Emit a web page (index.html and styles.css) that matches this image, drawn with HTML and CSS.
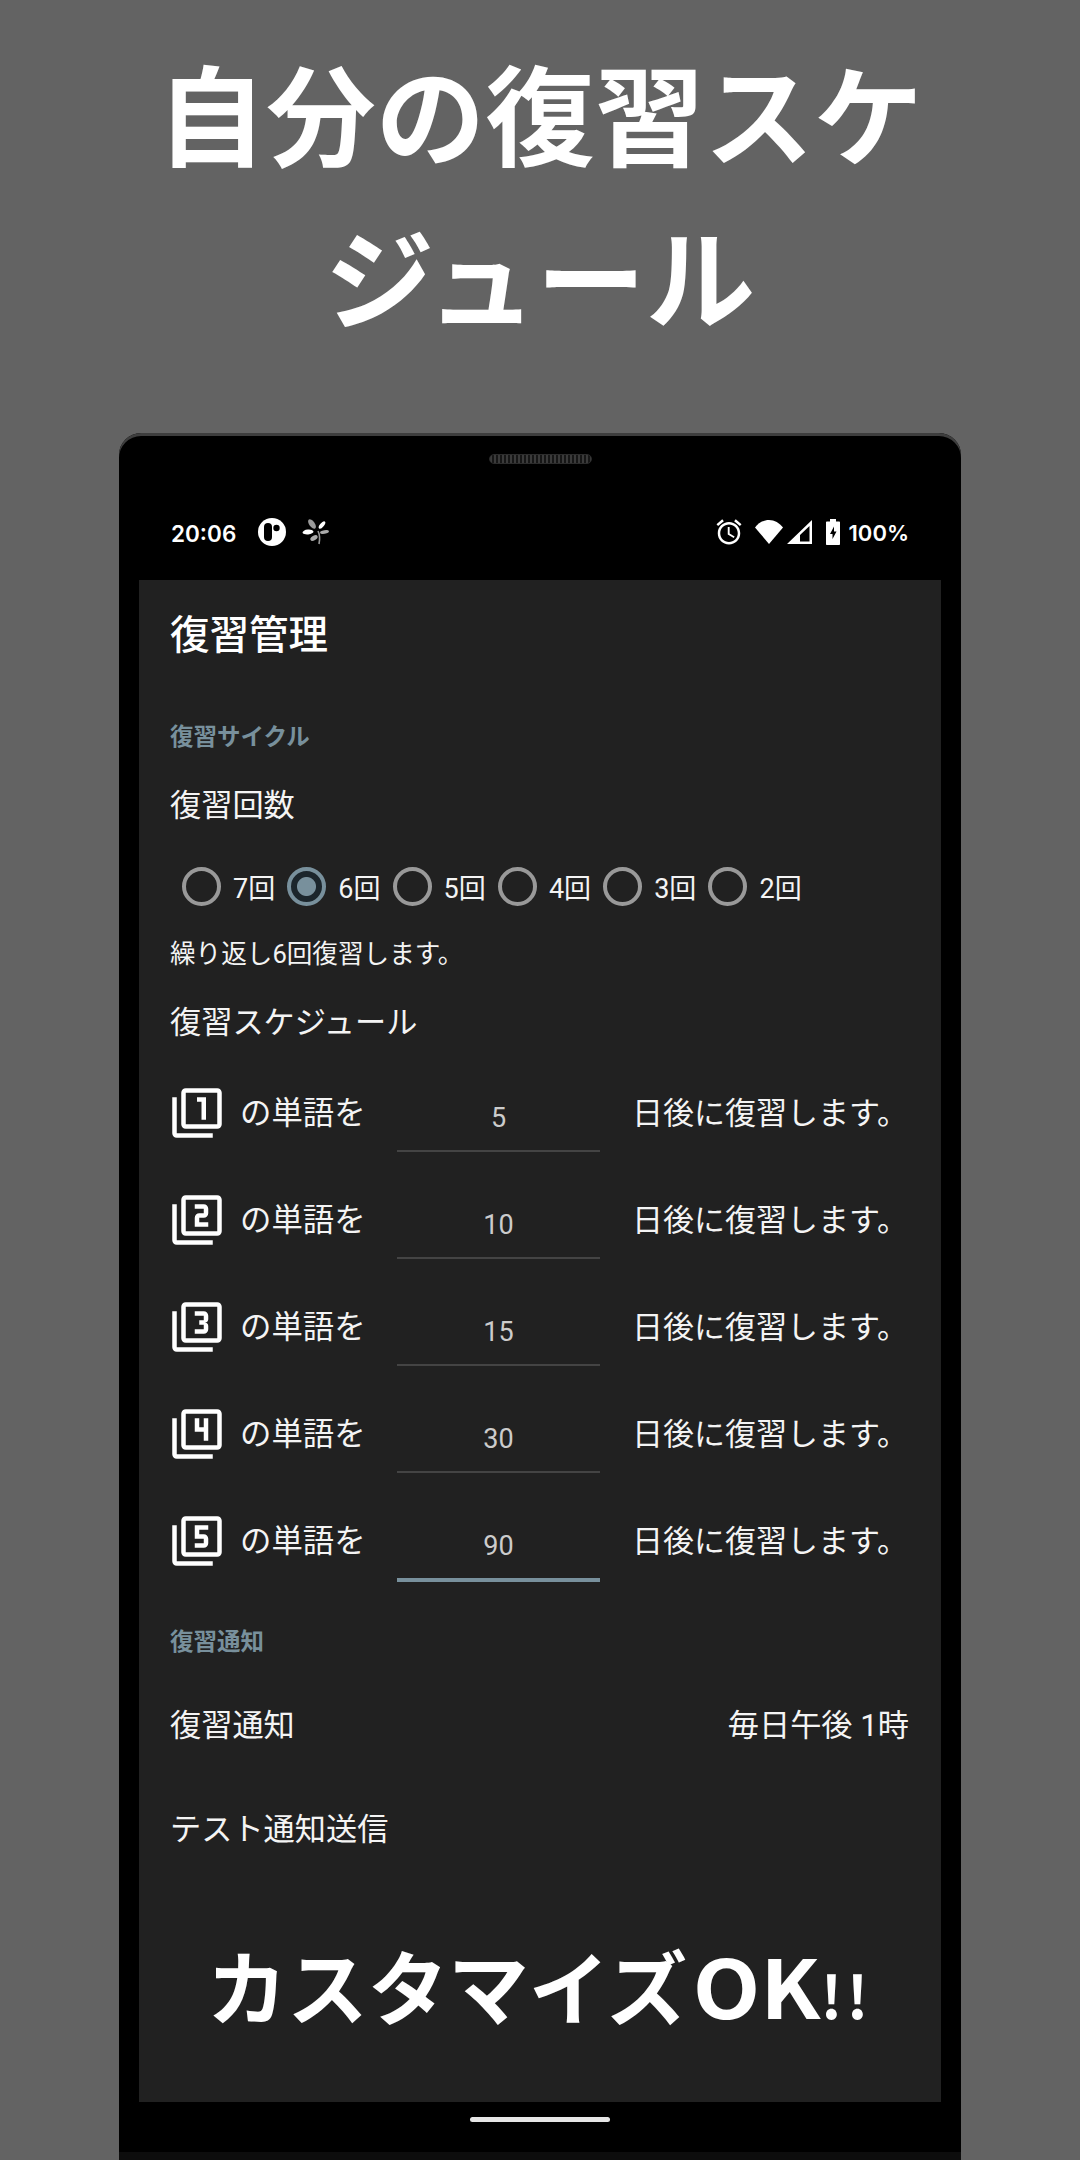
FILE: index.html
```html
<!DOCTYPE html>
<html lang="ja">
<head>
<meta charset="utf-8">
<title>復習管理</title>
<link rel="stylesheet" href="styles.css">
</head>
<body>
<h1 class="headline">自分の復習スケ<br>ジュール</h1>
<div class="phone">
  <div class="speaker"></div>
  <div class="statusbar">
    <div class="status-group">
      <span class="clock">20:06</span>
      <svg class="app-icon" viewBox="0 0 28 28"><circle cx="14" cy="14" r="14" fill="#fff"/><rect x="6" y="5" width="8" height="18" rx="4" fill="#000"/><circle cx="18.5" cy="10" r="3.2" fill="#000"/></svg>
      <svg class="leaf-icon" viewBox="0 0 28 28"><g><ellipse cx="10" cy="6" rx="2.8" ry="5.5" transform="rotate(-35 10 6)" fill="#999"/><ellipse cx="20" cy="7" rx="2" ry="4.5" transform="rotate(40 20 7)" fill="#fff"/><ellipse cx="6" cy="14" rx="5.5" ry="2.4" transform="rotate(-5 6 14)" fill="#fff"/><ellipse cx="22.5" cy="14" rx="4.5" ry="1.8" transform="rotate(-8 22.5 14)" fill="#aaa"/><ellipse cx="12" cy="20" rx="4" ry="2.2" transform="rotate(-30 12 20)" fill="#aaa"/><path d="M16 13c2 4 2 8 1 13" stroke="#999" stroke-width="1.6" fill="none"/></g></svg>
    </div>
    <div class="status-group right">
      <svg class="alarm-icon" viewBox="0 0 24 24"><path fill="#fff" d="M22 5.72l-4.6-3.86-1.29 1.53 4.6 3.86L22 5.72zM7.88 3.39L6.6 1.86 2 5.71l1.29 1.53 4.59-3.85zM12.5 8H11v6l4.75 2.85.75-1.23-4-2.37V8zM12 4c-4.97 0-9 4.03-9 9s4.03 9 9 9 9-4.03 9-9-4.03-9-9-9zm0 16c-3.87 0-7-3.13-7-7s3.13-7 7-7 7 3.13 7 7-3.13 7-7 7z"/></svg>
      <svg class="wifi-icon" viewBox="0 0 28 24"><path fill="#fff" d="M0 7.5C3.5 3 8.5 0 14 0s10.500 3 14 7.500L14 24z"/></svg>
      <svg class="signal-icon" viewBox="0 0 25 24"><path fill="#fff" d="M25 0v24H0zM22.500 6L13 15v6.500h9.500z"/><path fill="#fff" d="M13 15L2 24h11z"/></svg>
      <svg class="battery-icon" viewBox="0 0 14 26"><path fill="#fff" d="M4 0h6v2.500h3c.6 0 1 .4 1 1V25c0 .6-.4 1-1 1H1c-.6 0-1-.4-1-1V3.500c0-.6.4-1 1-1h3z"/><path fill="#000" d="M8 7.500L4 15h2.500v5L10.500 12.500H8z"/></svg>
      <span class="battery-text">100%</span>
    </div>
  </div>
  <main class="screen">
    <div class="app-title">復習管理</div>
    <div class="section-label">復習サイクル</div>
    <div class="count-title">復習回数</div>
    <div class="radios">
      <div class="radio"><span class="dot"></span><span class="radio-text">7回</span></div>
      <div class="radio checked"><span class="dot"></span><span class="radio-text">6回</span></div>
      <div class="radio"><span class="dot"></span><span class="radio-text">5回</span></div>
      <div class="radio"><span class="dot"></span><span class="radio-text">4回</span></div>
      <div class="radio"><span class="dot"></span><span class="radio-text">3回</span></div>
      <div class="radio"><span class="dot"></span><span class="radio-text">2回</span></div>
    </div>
    <div class="note">繰り返し6回復習します。</div>
    <div class="schedule-title">復習スケジュール</div>

    <div class="row">
      <svg class="filter" viewBox="0 0 24 24"><path d="M3 5H1v16c0 1.100.9 2 2 2h16v-2H3V5zm11 10h2V5h-4v2h2v8zm7-14H7c-1.100 0-2 .9-2 2v14c0 1.100.9 2 2 2h14c1.100 0 2-.9 2-2V3c0-1.100-.9-2-2-2zm0 16H7V3h14v14z"/></svg>
      <span class="row-lead">の単語を</span>
      <div class="field">5</div>
      <span class="row-tail">日後に復習します。</span>
    </div>
    <div class="row">
      <svg class="filter" viewBox="0 0 24 24"><path d="M3 5H1v16c0 1.100.9 2 2 2h16v-2H3V5zm18-4H7c-1.100 0-2 .9-2 2v14c0 1.100.9 2 2 2h14c1.100 0 2-.9 2-2V3c0-1.100-.9-2-2-2zm0 16H7V3h14v14zm-4-4h-4v-2h2c1.100 0 2-.89 2-2V7c0-1.110-.9-2-2-2h-4v2h4v2h-2c-1.100 0-2 .89-2 2v4h6v-2z"/></svg>
      <span class="row-lead">の単語を</span>
      <div class="field">10</div>
      <span class="row-tail">日後に復習します。</span>
    </div>
    <div class="row">
      <svg class="filter" viewBox="0 0 24 24"><path d="M21 1H7c-1.100 0-2 .9-2 2v14c0 1.100.9 2 2 2h14c1.100 0 2-.9 2-2V3c0-1.100-.9-2-2-2zm0 16H7V3h14v14zM3 5H1v16c0 1.100.9 2 2 2h16v-2H3V5zm14 8v-1.500c0-.83-.67-1.500-1.500-1.500.83 0 1.500-.67 1.500-1.500V7c0-1.110-.9-2-2-2h-4v2h4v2h-2v2h2v2h-4v2h4c1.100 0 2-.89 2-2z"/></svg>
      <span class="row-lead">の単語を</span>
      <div class="field">15</div>
      <span class="row-tail">日後に復習します。</span>
    </div>
    <div class="row">
      <svg class="filter" viewBox="0 0 24 24"><path d="M3 5H1v16c0 1.100.9 2 2 2h16v-2H3V5zm12 10h2V5h-2v4h-2V5h-2v6h4v4zm6-14H7c-1.100 0-2 .9-2 2v14c0 1.100.9 2 2 2h14c1.100 0 2-.9 2-2V3c0-1.100-.9-2-2-2zm0 16H7V3h14v14z"/></svg>
      <span class="row-lead">の単語を</span>
      <div class="field">30</div>
      <span class="row-tail">日後に復習します。</span>
    </div>
    <div class="row">
      <svg class="filter" viewBox="0 0 24 24"><path d="M21 1H7c-1.100 0-2 .9-2 2v14c0 1.100.9 2 2 2h14c1.100 0 2-.9 2-2V3c0-1.100-.9-2-2-2zm0 16H7V3h14v14zM3 5H1v16c0 1.100.9 2 2 2h16v-2H3V5zm14 8v-2c0-1.110-.9-2-2-2h-2V7h4V5h-6v6h4v2h-4v2h4c1.100 0 2-.89 2-2z"/></svg>
      <span class="row-lead">の単語を</span>
      <div class="field active">90</div>
      <span class="row-tail">日後に復習します。</span>
    </div>

    <div class="section-label second">復習通知</div>
    <div class="setting"><span>復習通知</span><span>毎日午後 1時</span></div>
    <div class="setting test">テスト通知送信</div>
    <div class="promo">カスタマイズ<span class="latin">OK</span><span class="bang">!!</span></div>
  </main>
  <div class="nav"><div class="home-bar"></div></div>
  <div class="chin"></div>
</div>
</body>
</html>
```

FILE: styles.css
```css
* { box-sizing: border-box; }

html, body {
  margin: 0;
  padding: 0;
}

body {
  width: 1080px;
  height: 2160px;
  overflow: hidden;
  background: #636363;
  font-family: Roboto, "Noto Sans CJK JP", sans-serif;
  color: #f4f4f4;
}

.headline {
  margin: 0;
  height: 433px;
  padding-top: 29px;
  font-family: "Noto Sans CJK JP", sans-serif;
  font-size: 109.500px;
  line-height: 163px;
  font-weight: 700;
  color: #fff;
  text-align: center;
}

.phone {
  width: 842px;
  height: 1727px;
  margin: 0 119px;
  background: #000;
  border-radius: 22px 22px 0 0;
  box-shadow: inset 0 3px 0 #3e3e3e;
  display: flex;
  flex-direction: column;
  align-items: center;
}

.speaker {
  width: 103px;
  height: 10px;
  margin-top: 21px;
  border: 1px solid #2c2c2c;
  border-radius: 5px;
  background: repeating-linear-gradient(90deg, #3a3a3a 0 2px, #161616 2px 4px);
  flex: none;
}

.statusbar {
  width: 100%;
  height: 96px;
  margin-top: 20px;
  padding: 0 52px;
  display: flex;
  justify-content: space-between;
  align-items: center;
  flex: none;
}

.status-group {
  display: flex;
  align-items: center;
}

.clock, .battery-text {
  font-family: Inter, sans-serif;
  font-size: 22.500px;
  font-weight: 600;
  color: #fff;
  padding-top: 2px;
}

.battery-text { font-size: 22px; margin-left: 9px; }

.app-icon { width: 28px; height: 28px; margin-left: 22px; }
.leaf-icon { width: 28px; height: 28px; margin-left: 16px; }
.alarm-icon { width: 30px; height: 30px; }
.wifi-icon { width: 28px; height: 24px; margin-left: 11px; }
.signal-icon { width: 25px; height: 24px; margin-left: 4px; }
.battery-icon { width: 14px; height: 26px; margin-left: 14px; }

.screen {
  width: 802px;
  height: 1522px;
  padding: 0 32px 0 31px;
  background: #212121;
  flex: none;
}

.app-title {
  height: 108px;
  padding-bottom: 5px;
  display: flex;
  align-items: center;
  font-family: "Noto Sans CJK JP", sans-serif;
  font-size: 39.500px;
  font-weight: 500;
  color: #fff;
}

.section-label {
  height: 96px;
  padding-bottom: 3px;
  display: flex;
  align-items: center;
  font-size: 23.500px;
  font-weight: 700;
  color: #78909c;
}

.section-label.second { height: 94px; }

.count-title, .schedule-title, .setting {
  display: flex;
  align-items: center;
  font-size: 31.200px;
  padding-bottom: 5px;
}

.count-title { height: 42px; }

.radios {
  height: 64px;
  margin-top: 31px;
  padding-left: 12px;
  padding-bottom: 5px;
  display: flex;
  align-items: center;
}

.radio {
  width: 105.300px;
  display: flex;
  align-items: center;
  gap: 12px;
  font-size: 27px;
  flex: none;
}

.dot {
  width: 39px;
  height: 39px;
  border: 4px solid #999;
  border-radius: 50%;
  flex: none;
}

.checked .dot {
  border-color: #78909c;
  background: radial-gradient(circle, #78909c 0 9px, #1c262c 10px);
}

.note {
  height: 64px;
  padding-bottom: 4px;
  display: flex;
  align-items: center;
  font-size: 25.600px;
}

.schedule-title { height: 74px; }

.row {
  height: 107px;
  display: flex;
  align-items: center;
}

.filter {
  width: 54px;
  height: 54px;
  fill: #fff;
  flex: none;
}

.row-lead {
  width: 126px;
  margin-left: 16px;
  padding-bottom: 5px;
  font-size: 31.400px;
  white-space: nowrap;
  flex: none;
}

.field {
  width: 203px;
  height: 69px;
  margin: 0 32px 14px 31px;
  padding-top: 2px;
  align-self: flex-end;
  display: flex;
  align-items: center;
  justify-content: center;
  border-bottom: 2px solid #444;
  font-size: 27px;
  color: #ccc;
  flex: none;
}

.field.active {
  height: 71px;
  margin-bottom: 12px;
  border-bottom: 4px solid #78909c;
}

.row-tail {
  padding-bottom: 5px;
  font-size: 31px;
  white-space: nowrap;
}

.setting {
  height: 74px;
  justify-content: space-between;
}

.setting.test {
  height: 104px;
  margin-top: 15px;
}

.promo {
  margin-top: 56px;
  line-height: 94px;
  text-align: center;
  font-family: "Noto Sans CJK JP", sans-serif;
  font-size: 80.500px;
  font-weight: 700;
  color: #fff;
  white-space: nowrap;
}

.latin {
  display: inline-block;
  margin: 0 5px 0 11px;
  transform: scaleX(1.09);
}

.bang {
  font-size: 59px;
  letter-spacing: 4px;
}

.nav {
  width: 100%;
  height: 50px;
  padding-top: 15px;
  display: flex;
  justify-content: center;
  flex: none;
}

.home-bar {
  width: 140px;
  height: 5px;
  border-radius: 3px;
  background: #e6e6e6;
}

.chin {
  width: 100%;
  height: 8px;
  background: #0d0d0d;
  flex: none;
}
```
